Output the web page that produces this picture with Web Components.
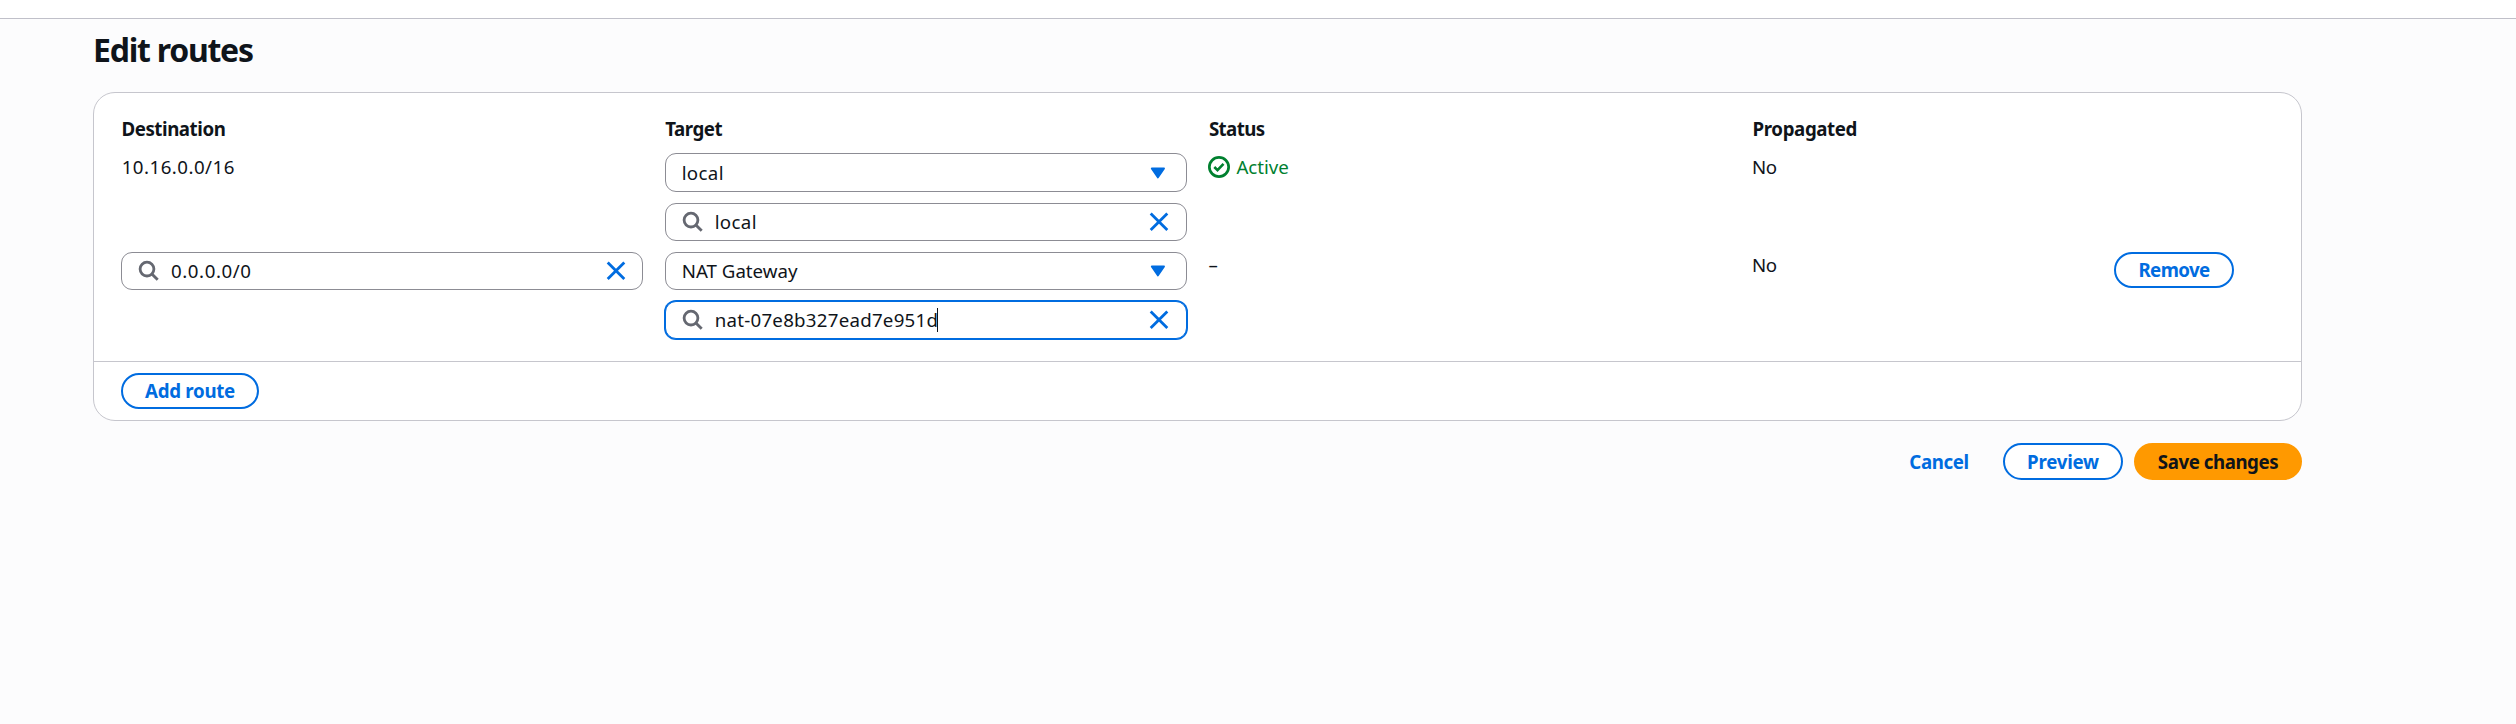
<!DOCTYPE html>
<html lang="en">
<head>
<meta charset="utf-8">
<title>Edit routes</title>
<style>
html,body{margin:0;height:100%}
body{background:#fcfcfd;color:#0f141a;font:400 18.7px/27px "Noto Sans","Open Sans",sans-serif;overflow:hidden}
</style>
</head>
<body>
<routes-page></routes-page>
<script>
const define = (name, html, setup) => {
  const tpl = document.createElement('template');
  tpl.innerHTML = html;
  customElements.define(name, class extends HTMLElement {
    connectedCallback() {
      if (this.shadowRoot) return;
      this.attachShadow({ mode: 'open' }).append(tpl.content.cloneNode(true));
      if (setup) setup(this, this.shadowRoot);
    }
  });
};

define('col-title', `<style>
:host{display:block;padding-left:.5px;line-height:28px;height:27px;font-weight:700;letter-spacing:-.45px;white-space:nowrap}
</style><slot></slot>`);

define('app-icon', `<style>
:host{display:block;flex:none;width:22px;height:22px}
svg{display:block;width:22px;height:22px;fill:none}
</style>`, (el, root) => {
  const art = {
    search: '<circle cx="9" cy="9.1" r="6.9" stroke="#656871" stroke-width="2.8"/><path d="M13.9 14l5.8 5.8" stroke="#656871" stroke-width="2.9"/>',
    close: '<path d="M2.7 2.5l16.6 16.6M19.3 2.5L2.7 19.1" stroke="#006ce0" stroke-width="2.8"/>',
    caret: '<path d="M4.7 6.4h12.4L10.9 15.6z" fill="#006ce0" stroke="#006ce0" stroke-width="1.7" stroke-linejoin="round"/>',
    check: '<circle cx="11" cy="11" r="9.65" stroke="#00802f" stroke-width="2.7"/><path d="M6.3 11l3.2 3.2 6-6.4" stroke="#00802f" stroke-width="2.6"/>'
  };
  root.innerHTML += `<svg viewBox="0 0 22 22">${art[el.getAttribute('name')]}</svg>`;
});

define('select-field', `<style>
:host{display:flex;align-items:center;justify-content:space-between;box-sizing:border-box;height:38px;padding:0 17px 0 16px;border:1px solid #8c8c94;border-radius:11px;background:#fff;white-space:nowrap}
:host([tall]){height:39px}
:host(:not([tall])) span{padding-bottom:1px}
</style><span><slot></slot></span><app-icon name="caret"></app-icon>`);

define('search-field', `<style>
:host{display:flex;align-items:center;box-sizing:border-box;height:38px;padding:0 16px 0 16px;border:1px solid #8c8c94;border-radius:11px;background:#fff;white-space:nowrap}
:host([focused]){border-color:#006ce0;box-shadow:0 0 0 1px #006ce0}
.text{flex:1;display:flex;align-items:center;padding:0 0 1px 11px}
.cursor{display:none;width:1px;height:24px;margin-left:-1px;background:#0f141a}
:host([focused]) .cursor{display:block}
</style><app-icon name="search"></app-icon>
<div class="text"><span><slot></slot></span><span class="cursor"></span></div>
<app-icon name="close"></app-icon>`);

define('status-label', `<style>
:host{display:flex;align-items:center;gap:6px;color:#00802f}
</style><app-icon name="check"></app-icon><span><slot></slot></span>`);

define('pill-button', `<style>
:host{display:flex;align-items:center;justify-content:center;box-sizing:border-box;height:36px;padding-bottom:1px;border:2px solid #006ce0;border-radius:19px;background:#fff;color:#006ce0;font-weight:700;letter-spacing:-.4px;white-space:nowrap}
:host([variant=link]){border-color:transparent;background:none}
:host([variant=primary]){border-color:#ff9900;background:#ff9900;color:#0f141a}
</style><slot></slot>`);

define('routes-card', `<style>
:host{display:block;box-sizing:border-box;width:2209px;border:1px solid #c6c6cd;border-radius:22px;background:#fff}
.body{padding:22px 27px}
.footer{display:flex;padding:11px 27px;border-top:1px solid #c6c6cd}
</style><div class="body"><slot></slot></div><div class="footer"><slot name="footer"></slot></div>`);

define('routes-page', `<style>
:host{display:block}
.bar{height:18px;background:#fff;border-bottom:1px solid #c0c0c9}
main{padding:8px 0 0 93px;width:2209px}
h1{margin:0 0 20px;font-size:32px;line-height:45px;font-weight:700;letter-spacing:-1.24px}
.grid{display:grid;grid-template-columns:522px 522px 522px 340.3px 120px;column-gap:21.7px;row-gap:11px;align-items:start}
.stack{display:grid;gap:11px}
.up{margin-top:-1px}
pill-button.item{width:120px}
.actions{display:flex;justify-content:flex-end;margin-top:22px}
.actions pill-button{height:37px}
</style>
<div class="bar"></div>
<main>
<h1>Edit routes</h1>
<routes-card>
  <div class="grid">
    <col-title>Destination</col-title><col-title>Target</col-title><col-title style="letter-spacing:-.6px">Status</col-title><col-title style="letter-spacing:-.39px">Propagated</col-title><span></span>
    <div style="letter-spacing:.47px;padding-left:.7px">10.16.0.0/16</div>
    <div class="stack">
      <select-field tall style="letter-spacing:.35px">local</select-field>
      <search-field style="letter-spacing:.35px">local</search-field>
    </div>
    <status-label>Active</status-label>
    <div style="letter-spacing:-.5px">No</div><span></span>
    <search-field style="letter-spacing:.56px;padding-right:15px">0.0.0.0/0</search-field>
    <div class="stack">
      <select-field>NAT Gateway</select-field>
      <search-field focused style="letter-spacing:.25px">nat-07e8b327ead7e951d</search-field>
    </div>
    <div class="up">–</div>
    <div class="up" style="letter-spacing:-.5px">No</div>
    <pill-button class="item" style="letter-spacing:-.6px">Remove</pill-button>
  </div>
  <pill-button slot="footer" style="width:138px;letter-spacing:-.29px">Add route</pill-button>
</routes-card>
<div class="actions">
  <pill-button variant="link" style="width:106px;margin-right:11px">Cancel</pill-button>
  <pill-button style="width:120px;margin-right:11px;letter-spacing:-.23px">Preview</pill-button>
  <pill-button variant="primary" style="width:168px;letter-spacing:-.45px">Save changes</pill-button>
</div>
</main>`);
</script>
</body>
</html>
